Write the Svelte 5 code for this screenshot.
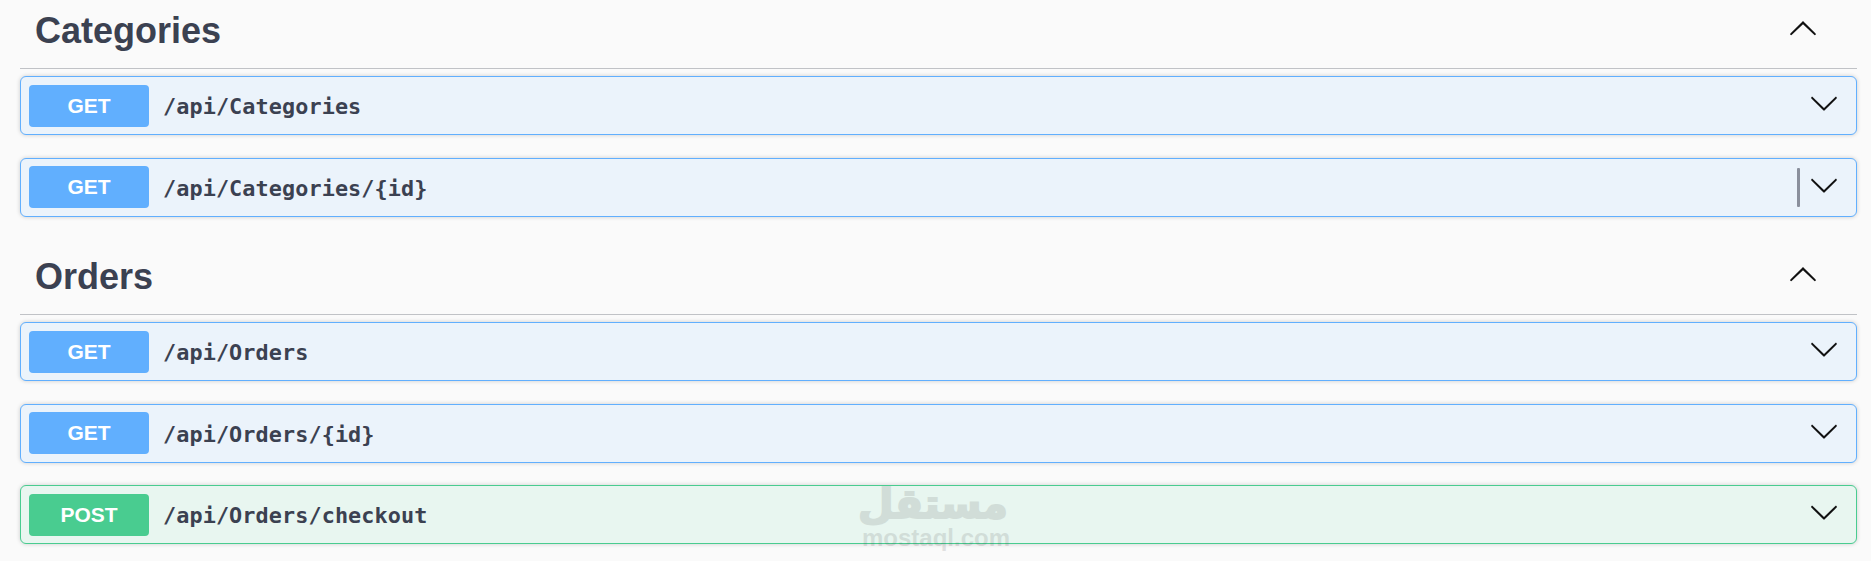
<script>
  const sections = [
    { name: 'Categories', ops: [
      { m: 'GET', p: '/api/Categories' },
      { m: 'GET', p: '/api/Categories/{id}', cursor: true }
    ]},
    { name: 'Orders', ops: [
      { m: 'GET', p: '/api/Orders' },
      { m: 'GET', p: '/api/Orders/{id}' },
      { m: 'POST', p: '/api/Orders/checkout' }
    ]}
  ];
  const arrow = 'M17.418 6.109c.272-.268.709-.268.979 0s.271.701 0 .969l-7.908 7.83c-.27.268-.707.268-.979 0l-7.908-7.83c-.27-.268-.27-.701 0-.969.271-.268.709-.268.979 0L10 13.25l7.418-7.141z';
</script>

<div class="page">
  {#each sections as s}
    <section class="tag">
      <header class="head">
        <h3>{s.name}</h3>
        <svg class="up" viewBox="0 0 20 20" width="30" height="30"><path d={arrow} /></svg>
      </header>
      {#each s.ops as o}
        <div class="op" class:post={o.m === 'POST'}>
          <span class="method">{o.m}</span>
          <span class="path">{o.p}</span>
          {#if o.cursor}<span class="cursor"></span>{/if}
          <svg class="down" class:pushed={!o.cursor} viewBox="0 0 20 20" width="30" height="30"><path d={arrow} /></svg>
        </div>
      {/each}
    </section>
  {/each}
</div>

<div class="mark">
  <div class="ar" dir="rtl" lang="ar">مستقل</div>
  <div class="en">mostaql.com</div>
</div>

<style>
  :global(body) {
    margin: 0;
    background: #fafafa;
    overflow: hidden;
  }
  .page {
    margin-top: -6px;
    padding: 0 14px 0 20px;
    font-family: "Liberation Sans", Arial, sans-serif;
    color: #3b4151;
  }
  .tag + .tag {
    padding-top: 1px;
  }
  .head {
    display: flex;
    align-items: center;
    justify-content: space-between;
    height: 74px;
    padding: 0 39px 0 15px;
    border-bottom: 1px solid rgba(59, 65, 81, 0.3);
    margin-bottom: 7px;
  }
  h3 {
    margin: 0 0 1px;
    font-size: 36px;
    font-weight: 700;
    line-height: 1;
    color: #3b4151;
  }
  .up {
    margin-bottom: 4px;
    transform: rotate(180deg);
    fill: #111;
  }
  .op {
    display: flex;
    align-items: center;
    height: 59px;
    box-sizing: border-box;
    margin-bottom: 22.5px;
    padding: 0 17px 0 8px;
    background: #ebf3fb;
    border: 1px solid #61affe;
    border-radius: 6px;
    box-shadow: 0 0 4px rgba(0, 0, 0, 0.19);
  }
  .op.post {
    background: #e8f6f0;
    border-color: #49cc90;
  }
  .method {
    width: 120px;
    height: 42px;
    display: flex;
    align-items: center;
    justify-content: center;
    background: #61affe;
    border-radius: 4px;
    color: #fff;
    font-size: 21px;
    font-weight: 700;
    flex: none;
  }
  .post .method {
    background: #49cc90;
  }
  .path {
    margin: 2px 0 0 14px;
    font-family: "DejaVu Sans Mono", "Liberation Mono", monospace;
    font-size: 21.8px;
    letter-spacing: 0.1px;
    font-weight: 700;
    color: #3b4151;
  }
  .cursor {
    margin-left: auto;
    width: 3px;
    height: 39px;
    border-radius: 1px;
    background: #8a8f9c;
    margin-right: 9px;
  }
  .down {
    fill: #111;
    flex: none;
    margin-bottom: 5px;
  }
  .down.pushed {
    margin-left: auto;
  }
  .mark {
    position: absolute;
    left: 862px;
    top: 481px;
    width: 146px;
    text-align: center;
    color: #3c3c3c;
    opacity: 0.13;
    pointer-events: none;
  }
  .ar {
    font-family: "DejaVu Sans", sans-serif;
    font-weight: 700;
    font-size: 41px;
    line-height: 47px;
    -webkit-text-stroke: 2px #3c3c3c;
    white-space: nowrap;
  }
  .en {
    font-family: "Liberation Sans", sans-serif;
    font-weight: 700;
    font-size: 24px;
    line-height: 20px;
  }
</style>
